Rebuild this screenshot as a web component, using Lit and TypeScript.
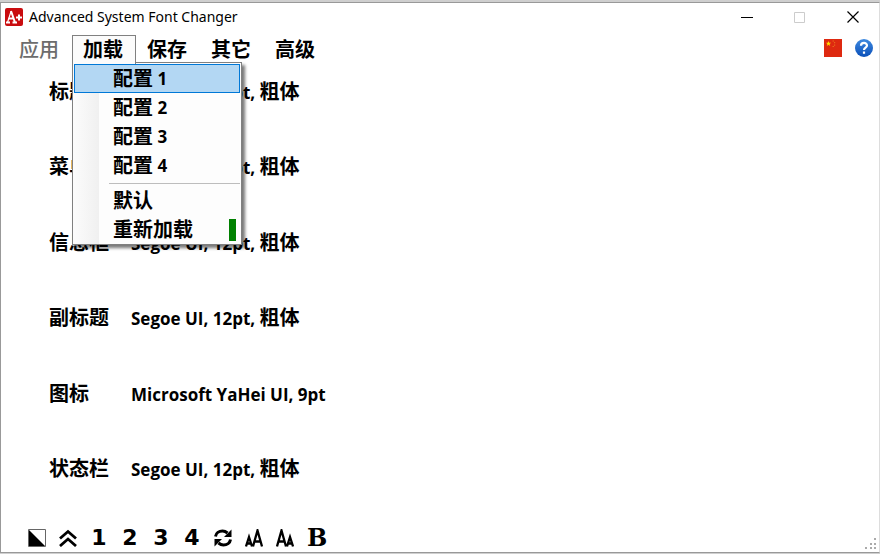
import { LitElement, html, css, svg } from "lit";
import { customElement } from "lit/decorators.js";

const MENUS = ["应用", "加载", "保存", "其它", "高级"];
const FONTS: [string, string, string][] = [
  ["标题", "Segoe UI, 12pt, ", "粗体"],
  ["菜单", "Segoe UI, 12pt, ", "粗体"],
  ["信息框", "Segoe UI, 12pt, ", "粗体"],
  ["副标题", "Segoe UI, 12pt, ", "粗体"],
  ["图标", "Microsoft YaHei UI, 9pt", ""],
  ["状态栏", "Segoe UI, 12pt, ", "粗体"],
];

const refreshIcon = svg`<path d="M1.500 7.500C2 4 5 2 8.500 2c2 0 3.600 .8 5 2" fill="none" stroke="#000" stroke-width="3"/><path d="M17.500 .5v7.500h-7.500z"/><path d="M16.500 10.500C16 14 13 16 9.500 16c-2 0-3.600-.8-5-2" fill="none" stroke="#000" stroke-width="3"/><path d="M.5 17.500V10H8z"/>`;
const smallFirst = svg`<path d="M1 17.500L4 8L7 17.500M2 14.500h4M8 17.500L12.500 1.500L17 17.500M9.500 12.500h6" fill="none" stroke="#000" stroke-width="2.300"/>`;
const bigFirst = svg`<path d="M1 17.500L5.500 1.500L10 17.500M2.500 12.500h6M11 17.500L14 8L17 17.500M12 14.500h4" fill="none" stroke="#000" stroke-width="2.300"/>`;

@customElement("app-root")
export class AppRoot extends LitElement {
  static styles = css`
    :host {
      display: block;
      height: 100vh;
      font-family: "Open Sans", "Noto Sans CJK SC", sans-serif;
      color: #000;
      background: #cfcfcf;
    }
    * { box-sizing: border-box; }
    button {
      font: inherit;
      color: inherit;
      background: none;
      border: 0;
      padding: 0;
      margin: 0;
    }
    svg { display: block; }
    .desk { height: 100%; padding-top: 2px; display: flex; flex-direction: column; padding-bottom: 1px; }
    .window {
      flex: 1;
      min-height: 0;
      display: flex;
      flex-direction: column;
      background: #fff;
      border: 1px solid #999;
      border-right-color: #ddd;
    }
    .titlebar { height: 28px; display: flex; align-items: center; padding-left: 4px; }
    .title {
      flex: 1;
      margin: 0 0 0 6px;
      font: 400 14px/20px "Noto Sans", sans-serif;
    }
    .caption { width: 53px; height: 28px; display: grid; place-items: center; }
    .toolbar { display: flex; align-items: flex-start; height: 30px; margin-top: 4px; padding: 0 6px 0 7px; }
    .menu { display: flex; flex: 1; margin: 0; padding: 0; list-style: none; }
    .item { width: 64px; position: relative; }
    .top {
      width: 64px;
      height: 29px;
      padding-right: 2px;
      font-size: 20px;
      font-weight: 700;
      line-height: 28px;
      border: 1px solid transparent;
      border-bottom: 0;
    }
    .top:disabled { color: #6d6d6d; font-weight: 500; }
    .top.open { position: relative; z-index: 2; background: #fbfbfb; border-color: #808080; }
    .drop {
      position: absolute;
      top: 27px;
      left: 0;
      z-index: 1;
      width: 170px;
      padding: 1px 1px 0;
      border: 1px solid #808080;
      background: linear-gradient(90deg, #fcfcfc, #f0f0f0 26px, #fdfdfd 26px);
      box-shadow: 3px 3px 3px #0008;
    }
    .entry {
      display: flex;
      align-items: center;
      width: 100%;
      height: 29px;
      padding-left: 38px;
      border: 1px solid transparent;
      font-size: 20px;
      font-weight: 700;
      line-height: 27px;
      white-space: pre;
    }
    .entry.hot { background: #b3d7f3; border-color: #0078d7; }
    .latin { font-size: 17px; }
    .rule { height: 1px; margin: 3px 0 2px 35px; border: 0; background: #bdbdbd; }
    .mark { width: 7px; height: 22px; margin-left: auto; margin-right: 3px; background: #008000; }
    .tools { display: flex; gap: 13px; padding-top: 4px; }
    .fonts {
      flex: 1;
      display: flex;
      flex-direction: column;
      justify-content: space-between;
      margin: 0;
      padding: 12px 48px 40px;
      font-size: 20px;
      font-weight: 700;
      line-height: 30px;
    }
    .row { display: grid; grid-template-columns: 82px 1fr; height: 30px; }
    .row dt, .row dd { margin: 0; white-space: pre; }
    .bottom { display: flex; align-items: center; height: 28px; padding: 0 2px 0 27px; gap: 13px; }
    .tool { width: 18px; height: 22px; display: grid; place-items: center; font: 700 22px/22px "DejaVu Sans", sans-serif; }
    .serif { font: 700 24px/22px "DejaVu Serif", serif; }
    .grip { margin: 0 0 2px auto; align-self: flex-end; }
  `;

  private entry(text: string, latin = "", hot = false) {
    return html`<button class="entry ${hot ? "hot" : ""}" role="menuitem">${text}${latin ? html`<span class="latin"> ${latin}</span>` : ""}${text === "重新加载" ? html`<span class="mark"></span>` : ""}</button>`;
  }

  private drop() {
    return html`<div class="drop" role="menu">
      ${["1", "2", "3", "4"].map((n) => this.entry("配置", n, n === "1"))}
      <hr class="rule" />
      ${this.entry("默认")}${this.entry("重新加载")}
    </div>`;
  }

  private tool(label: string, shape: unknown) {
    return html`<button class="tool" aria-label=${label}><svg width="18" height="18" viewBox="0 0 18 18">${shape}</svg></button>`;
  }

  render() {
    return html`<div class="desk"><main class="window">
      <header class="titlebar">
        <svg width="18" height="18" viewBox="0 0 18 18">
          <rect width="18" height="18" rx="2" fill="#c90c0f" />
          <path d="M2.500 14.500L6 3.500" fill="none" stroke="#fff" stroke-width="1.200" />
          <path d="M6 3L10 14.500M3.500 10.500h5M1 14.500h4M7.500 14.500h4.500M11 9.500h6M14 6.500v6" fill="none" stroke="#fff" stroke-width="2" />
        </svg>
        <h1 class="title">Advanced System Font Changer</h1>
        <button class="caption" aria-label="Minimize"><svg width="12" height="11"><path d="M0 5.500h12" stroke="#000" /></svg></button>
        <button class="caption" aria-label="Maximize" disabled><svg width="11" height="11"><path d="M.5 .5h10v10H.5z" fill="none" stroke="#ccc" /></svg></button>
        <button class="caption" aria-label="Close"><svg width="12" height="12"><path d="M.5 .5l11 11M11.500 .5l-11 11" stroke="#000" stroke-width="1.200" /></svg></button>
      </header>
      <nav class="toolbar">
        <ul class="menu">
          ${MENUS.map((m, i) => html`<li class="item"><button class="top ${i === 1 ? "open" : ""}" ?disabled=${i === 0}>${m}</button>${i === 1 ? this.drop() : ""}</li>`)}
        </ul>
        <div class="tools">
          <button aria-label="中文"><svg width="18" height="18"><path fill="#de2910" d="M0 0h18v18H0z" /><path fill="#fd0" d="M4.500 2l.7 1.800h1.900L5.600 5l.6 1.900-1.700-1.100-1.700 1.100L3.400 5 1.900 3.800h1.900z" /><path fill="#e8681a" d="M8.500 1.500h1.500v1H8.500zM10 3h1.200v1.200H10zM10 5.500h1.200v1.200H10zM8.500 7h1.500v1H8.500z" /></svg></button>
          <button aria-label="Help"><svg width="18" height="18"><defs><linearGradient id="g" x2="0" y2="1"><stop stop-color="#3f8ae0" /><stop offset="1" stop-color="#0a4fb8" /></linearGradient></defs><circle cx="9" cy="9" r="9" fill="url(#g)" /><path d="M6 6.800C6 3 12 3 12 6.500c0 2.200-3 2-3 4.500M9 12.500v2.300" fill="none" stroke="#fff" stroke-width="2.200" /></svg></button>
        </div>
      </nav>
      <dl class="fonts">
        ${FONTS.map(([a, b, c]) => html`<div class="row"><dt>${a}</dt><dd><span class="latin">${b}</span>${c}</dd></div>`)}
      </dl>
      <footer class="bottom">
        ${this.tool("Invert", svg`<path d="M.5 .5h17v17H.5z" fill="#fff" stroke="#666"/><path d="M1 1v16h16z"/>`)}
        ${this.tool("Top", svg`<path d="M1 9.500L9 2.500l8 7M1 17L9 10l8 7" fill="none" stroke="#000" stroke-width="2.800"/>`)}
        ${["1", "2", "3", "4"].map((n) => html`<button class="tool">${n}</button>`)}
        ${this.tool("Refresh", refreshIcon)}
        ${this.tool("Larger", smallFirst)}
        ${this.tool("Smaller", bigFirst)}
        <button class="tool serif">B</button>
        <svg class="grip" width="12" height="12" fill="#aaa"><path d="M9 0h2v2H9zM5 5h2v2H5zM9 5h2v2H9zM0 9h2v2H0zM5 9h2v2H5zM9 9h2v2H9z" /></svg>
      </footer>
    </main></div>`;
  }
}
